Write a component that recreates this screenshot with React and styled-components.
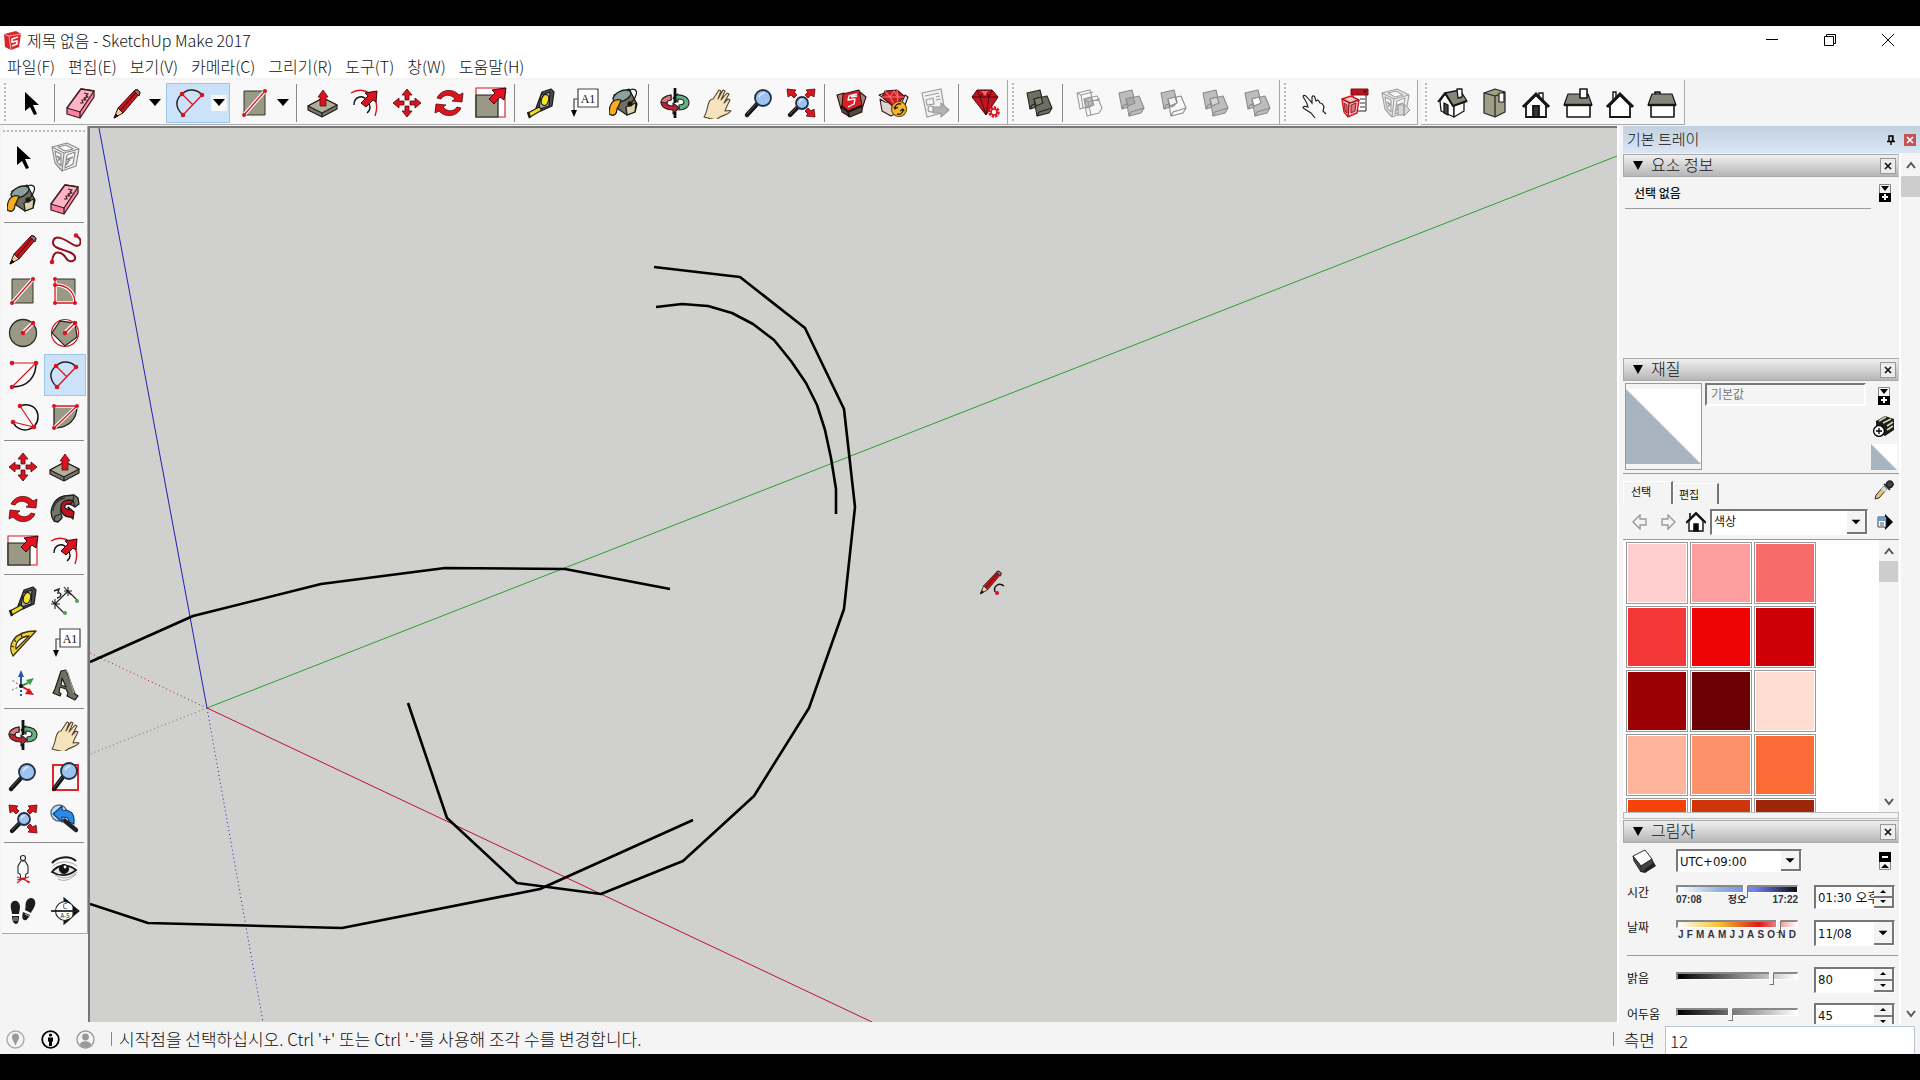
import React from 'react';
import styled, { createGlobalStyle } from 'styled-components';

const GlobalStyle = createGlobalStyle`
* { box-sizing: border-box; }

body {
  margin: 0;
  background: #000;
  color: #111;
  font-family: "Noto Sans CJK KR", "Noto Sans", sans-serif;
}

button, input, select {
  font: inherit;
  color: inherit;
  margin: 0;
  padding: 0;
  border: 0;
  border-radius: 0;
  background: none;
}
`;

const RED = '#d9141f';
const OLIVE = '#9a9985';
const DARK = '#161616';

/* ---------- icons, all on a 32 x 32 grid ---------- */

const Dot = ({ x, y, r = 2.3 }) => <circle cx={x} cy={y} r={r} fill={RED} />;

const Hand = () => (
  <path d="M3 30c2-3 3-7 4-12 1-4 3-6 5-6l6-9 2 1-3 8 5-9 2 1-4 9 6-7 2 1-5 9 4-4 2 1c-2 4-4 7-5 11 2 0 4-1 6 0-2 3-7 4-11 6l-4 3z" fill="#f6e3bd" stroke="#54442c" strokeWidth="1.1" strokeLinejoin="round" />
);

const Lens = ({ cx = 20, cy = 11, r = 8, hx = 4, hy = 28 }) => (
  <>
    <path d={`M${cx - r * 0.8} ${cy + r * 0.8}L${hx} ${hy}`} stroke={DARK} strokeWidth="4.4" strokeLinecap="round" />
    <path d={`M${cx - r * 0.9} ${cy + r * 0.9 - 1}L${hx} ${hy - 1}`} stroke="#55585c" strokeWidth="1" />
    <circle cx={cx} cy={cy} r={r} fill="#9dc2ee" stroke="#223045" strokeWidth="1.8" />
    <path d={`M${cx - r * 0.5} ${cy - r * 0.1}q${r * 0.2}-${r * 0.5} ${r * 0.7}-${r * 0.5}`} fill="none" stroke="#dcebfb" strokeWidth="1.4" />
  </>
);

const Solids = ({ a, b, cut, line = '#8b8b8b' }) => (
  <g stroke={line} strokeWidth="1.1" strokeLinejoin="round">
    <path d="M4 6l13-3 3 12-3 4-10 3z" fill={a} />
    <path d="M11 12l13-3 5 12-3 5-12 3z" fill={b} />
    <path d="M14 29l2-4 13-4" fill="none" />
    <path d="M7 22l2-4 3-1" fill="none" />
    <path d="M11 12l7-2 2 6-7 3z" fill={cut} />
  </g>
);

const WireSolids = () => (
  <g fill="none" stroke="#9a9a9a" strokeWidth="1.1" strokeLinejoin="round">
    <path d="M11 12l7-2 3 8-7 3z" fill="#bdbdbd" />
    <path d="M4 6l13-3 3 12-3 4-10 3zM4 6l4 2 12-3M8 8l2 13M11 12l13-3 5 12-3 5-12 3zM11 12l4 3 12-3M15 15l3 13" />
  </g>
);

const Frame = ({ color = '#8d8d8d' }) => (
  <g fill="none" stroke={color} strokeWidth="1.2" strokeLinejoin="round">
    <path d="M3 6l15-4 12 6-3 17-14 5L6 22z" fill="#ededed" />
    <path d="M3 6l12 6 15-4M15 12l-2 18" />
    <path d="M6 10l6 3v12l-4-4zM18 14l8-3-2 12-8 4zM9 6l8-2 7 4-8 2z" fill="#fafafa" />
    <path d="M8 15l4 3M17 19l7-3M17 24l4-6M9 20l2-4" strokeWidth="1.8" />
  </g>
);

const House = ({ roof = '#fff', chimney, door, wide }) => wide ? (
  <g stroke={DARK} strokeWidth="1.6" strokeLinejoin="round">
    {chimney === 'back' && <path d="M9 7V5h5v2" fill="#999" />}
    <path d="M5 17h23v13H5z" fill="#fff" />
    <path d="M6 7h20l4 11H2z" fill={roof} strokeWidth="1.2" />
    <path d="M2 18h28" strokeWidth="2.4" />
    {chimney === 'front' && <path d="M18 2h7v9h-7z" fill="#fff" />}
  </g>
) : (
  <g stroke={DARK} strokeWidth="1.8" strokeLinejoin="miter">
    <path d={chimney === 'right' ? 'M19 11V6h4v9' : 'M9 13V5h3v6'} fill="#fff" strokeWidth="1.4" />
    <path d="M6 18L16 8l10 10v12H6z" fill="#fff" />
    <path d="M3 20L16 7l13 13" fill="none" strokeWidth="3" />
    {door && <path d="M13 19h6v11h-6z" fill="#333" />}
  </g>
);

const icons = {
  select: <path d="M10 5v19l5-4 4 8 3-1-4-9h6z" fill="#000" />,
  eraser: (
    <g stroke="#3c1c24" strokeWidth="1.3" strokeLinejoin="round">
      <path d="M16 2l13 2v6L15 31 2 27v-6z" fill="#fb86a0" />
      <path d="M16 2l13 2-14 21-13-4z" fill="#ffb3c4" />
      <path d="M15 25v6" fill="none" />
      <path d="M19 6l4 1-2 2 2 1-4 1 2 2-4 0 1 3-3 0" fill="none" strokeWidth="1.2" />
    </g>
  ),
  pencil: (
    <g stroke="#34100f" strokeWidth="1" strokeLinejoin="round">
      <path d="M24 3q4-1 5 3L12 26l-5-5z" fill="#c5161d" />
      <path d="M26 4L10 23" stroke="#7b0b10" strokeWidth="1.4" />
      <path d="M23 4l5 5 1-3q-1-4-5-3z" fill="#8c6f74" />
      <path d="M7 21l5 5-9 5z" fill="#e9cf9f" />
      <path d="M5 27l2 2-4 2z" fill="#000" />
    </g>
  ),
  freehand: (
    <g fill="none">
      <path d="M3 29C4 14 14 20 17 25s10 4 9-1C24 16 3 18 4 9S17 7 23 11s10 1 8-5l-4-4" stroke="#8d1118" strokeWidth="2" />
      <Dot x={3} y={29} /><Dot x={27} y={2.5} />
    </g>
  ),
  arc: (
    <g fill="none" strokeWidth="1.5">
      <path d="M8 28C-1 20 1 12 7 7c6-6 15-5 20 1" stroke="#222" />
      <path d="M27 8L8 28M7 7l11 11" stroke={RED} strokeWidth="1.3" />
      <Dot x={27} y={8} /><Dot x={8} y={28} /><Dot x={7} y={7} />
    </g>
  ),
  rect: (
    <g>
      <path d="M5 4h21v24H5z" fill={OLIVE} stroke="#34342c" />
      <path d="M5 28L26 4" stroke="#fff" strokeWidth="3.6" />
      <path d="M5 28L26 4" stroke={RED} strokeWidth="1.3" />
      <Dot x={5} y={28} r={2} /><Dot x={26} y={4} r={2} />
    </g>
  ),
  rotRect: (
    <g>
      <path d="M6 4h20v24H6z" fill={OLIVE} stroke="#34342c" />
      <path d="M6 10c13 0 20 8 20 18H6V4" fill="none" stroke="#fff" strokeWidth="3.6" />
      <path d="M6 10c13 0 20 8 20 18H6V4" fill="none" stroke={RED} strokeWidth="1.3" />
      <Dot x={6} y={4} r={2} /><Dot x={6} y={10} r={2} /><Dot x={6} y={28} r={2} /><Dot x={26} y={28} r={2} />
    </g>
  ),
  circle: (
    <g>
      <circle cx="16" cy="16" r="13.5" fill={OLIVE} stroke="#2c2c28" strokeWidth="1.3" />
      <path d="M16 16l10-10" stroke="#fff" strokeWidth="4" /><path d="M16 16l10-10" stroke={RED} strokeWidth="1.4" />
      <Dot x={16} y={16} /><Dot x={26} y={6} />
    </g>
  ),
  polygon: (
    <g>
      <circle cx="16" cy="16" r="13.5" fill="#fff" stroke={RED} strokeWidth="1.2" />
      <path d="M11 4l15 2 2 14-12 9L3 16z" fill={OLIVE} stroke="#2c2c28" strokeWidth="1.3" />
      <path d="M16 16l10-10" stroke="#fff" strokeWidth="4" /><path d="M16 16l10-10" stroke={RED} strokeWidth="1.4" />
      <Dot x={16} y={16} /><Dot x={26} y={6} />
    </g>
  ),
  arcCenter: (
    <g fill="none">
      <path d="M29 4c0 14-8 24-24 24" stroke="#111" strokeWidth="1.5" />
      <path d="M5 4h24L5 28" stroke={RED} strokeWidth="1.2" />
      <Dot x={5} y={4} /><Dot x={29} y={4} /><Dot x={5} y={28} />
    </g>
  ),
  arc3: (
    <g fill="none">
      <path d="M13 5c10-4 18 2 18 11 0 14-19 18-25 5" stroke="#111" strokeWidth="1.5" />
      <path d="M13 5l14 21L6 21" stroke={RED} strokeWidth="1.2" />
      <Dot x={13} y={5} /><Dot x={27} y={26} /><Dot x={6} y={21} />
    </g>
  ),
  pie: (
    <g>
      <path d="M5 5h23c0 14-9 22-23 22z" fill={OLIVE} stroke="#222" strokeWidth="1.3" />
      <path d="M5 5h23L5 27" fill="none" stroke="#fff" strokeWidth="3.4" />
      <path d="M5 5h23L5 27" fill="none" stroke={RED} strokeWidth="1.3" />
      <Dot x={5} y={5} r={2} /><Dot x={28} y={5} r={2} /><Dot x={5} y={27} r={2} />
    </g>
  ),
  pushPull: (
    <g stroke="#20201c" strokeWidth="1.2" strokeLinejoin="round">
      <path d="M1 19l15-8 14 7v4L15 30 1 23z" fill="#77766a" />
      <path d="M1 19l15-8 14 7-15 8z" fill="#aeae9b" />
      <path d="M15 26v4" />
      <path d="M16 3l5 7h-2v9h-6v-9h-2z" fill={RED} stroke="#5c080d" strokeWidth=".8" />
    </g>
  ),
  offset: (
    <g fill="none">
      <path d="M2 6C14-2 33 8 26 29" stroke={RED} strokeWidth="1.4" />
      <path d="M5 18c0-8 8-11 13-5 4 5 4 10 0 13" stroke="#111" strokeWidth="1.4" />
      <path d="M28 4l-1 11-3-2-7 7-5-4 7-7-3-3z" fill={RED} stroke="#3c080b" />
    </g>
  ),
  move: (
    <g fill={RED} stroke="#4e070b" strokeWidth=".8">
      <path d="M16 2l5 6h-3v5h-4V8h-3zM16 30l-5-6h3v-5h4v5h3zM2 16l6-5v3h5v4H8v3zM30 16l-6 5v-3h-5v-4h5v-3z" />
    </g>
  ),
  rotate: (
    <g fill={RED} stroke="#5e080d" strokeWidth=".8">
      <path d="M4 11C8 2 20 1 26 8l4-2-1 9-10-1 3-2c-4-5-11-5-14 0z" />
      <path d="M28 21C24 30 12 31 6 24l-4 2 1-9 10 1-3 2c4 5 11 5 14 0z" />
    </g>
  ),
  scale: (
    <g>
      <path d="M1 1h29v29H1z" fill="#fff" stroke={RED} strokeWidth="1.1" />
      <path d="M1 8h22v22H1z" fill={OLIVE} stroke="#1e1e1a" strokeWidth="1.2" />
      <path d="M31 1l-2 12-4-3-6 7-5-5 6-6-3-3z" fill="#e50f1f" stroke="#3c080b" strokeWidth="1" />
    </g>
  ),
  followMe: (
    <g stroke="#1c1c1a" strokeWidth="1.3" strokeLinejoin="round">
      <path d="M9 29l-4-1C-1 20 3 6 15 3l10-1 4 3 1 6-4 3c-6-5-13-3-14 3-1 5 2 7 1 8z" fill="#74746a" />
      <path d="M4 18c0-6 5-12 12-13M25 2l-1 5 2 7M5 28l1-5 6-2" fill="none" stroke="#2c2c28" />
      <path d="M12 13c1-6 8-7 12-5l-2 3c-4-1-7 1-6 4l4 2-1-3 6 5-1 7-2-2c-6 1-11-4-10-11z" fill="#c0141d" />
    </g>
  ),
  tape: (
    <g stroke="#1c1c1c" strokeWidth="1.2" strokeLinejoin="round">
      <path d="M17 5l9-3 3 3-2 14-11 5-5-3z" fill="#4b4b4b" />
      <path d="M16 8l9-3-1 14-10 3z" fill="#a9a9a9" />
      <ellipse cx="20" cy="13" rx="3.6" ry="5.6" fill="#f5e526" transform="rotate(15 20 13)" />
      <path d="M14 20l3 3-12 7-2-4z" fill="#f0dc20" />
      <path d="M3 25l2 6" strokeWidth="2.4" />
    </g>
  ),
  text: (
    <g>
      <path d="M11 2h20v18H11z" fill="#fff" stroke="#444" strokeWidth="1.2" />
      <path d="M11 12H7v14" fill="none" stroke="#444" strokeWidth="1.2" />
      <path d="M4 23h6l-3 7z" fill="#000" />
      <text x="21" y="16" textAnchor="middle" fontSize="12" fontFamily="Liberation Serif, serif" fill="#111">A1</text>
    </g>
  ),
  paint: (
    <g stroke="#1d1d18" strokeWidth="1.3" strokeLinejoin="round">
      <path d="M5 8L20 2l8 15-2 8-8 3-9-6z" fill="#6f6e60" />
      <path d="M17 20l10-4-1 9-8 3z" fill="#ddd0ac" />
      <ellipse cx="13" cy="9" rx="9.5" ry="5" fill="#8ba0a0" transform="rotate(-24 13 9)" />
      <path d="M12 13C5 11 0 16 0 27c5 3 8 0 8-5 2-4 3-5 4-9z" fill="#f7ac1b" />
      <path d="M20 4c4-4 9-1 7 4-1 4-3 5-5 8" fill="none" strokeWidth="1.2" />
      <circle cx="21" cy="17" r="2" fill="#111" />
    </g>
  ),
  dimension: (
    <g fill="none" stroke="#222" strokeWidth="1.1">
      <path d="M6 19L19 6M6 19l9 9M19 6l9 9M2 19h9M6 14v10M3 16l7 7M15 6h8M19 2v9M15 2l7 8" />
      <path d="M5 6l5-2-1 4c4-1 4 4-1 5" strokeWidth="1.4" />
      <circle cx="16" cy="28" r="2" fill="#4ca34e" stroke="none" /><circle cx="28" cy="16" r="2" fill="#4ca34e" stroke="none" />
    </g>
  ),
  protractor: (
    <g stroke="#3d3205" strokeWidth="1.3" strokeLinejoin="round">
      <path d="M29 4L6 29C0 20 5 4 29 4z" fill="#e9cf3d" />
      <path d="M22 9L9 22c-1-6 3-12 13-13z" fill="#f9f9f9" />
      <path d="M4 19l3 1M7 12l2 3M14 7l1 3" />
    </g>
  ),
  axes: (
    <g fill="none" strokeWidth="2">
      <path d="M14 17V8" stroke="#2358a8" /><path d="M14 1l3 7h-6z" fill="#2358a8" />
      <path d="M14 17l7-3" stroke="#3a9a44" /><path d="M27 9l-4 7-4-5z" fill="#3a9a44" />
      <path d="M14 17l7 4" stroke={RED} /><path d="M27 26l-9-1 4-6z" fill={RED} />
      <path d="M14 17v11" stroke="#2358a8" strokeDasharray="2 2" /><path d="M14 17l-9-6" stroke={RED} strokeDasharray="2 2" strokeWidth="1" /><path d="M14 17l-9 4" stroke="#3a9a44" strokeDasharray="2 2" strokeWidth="1" />
      <circle cx="14" cy="17" r="2" fill="#111" />
    </g>
  ),
  text3d: (
    <g stroke="#1b1b18" strokeWidth="1.2" strokeLinejoin="round" fill="#6f6f63">
      <path d="M12 2l5-1 9 24 3 2-3 4-8-4 1-3-2-4-6-2-1 5 2 2-1 2-7-3 2-4z" />
      <path d="M13 9l4 9-5-2z" fill="#f4f4f4" />
      <path d="M17 1l2 3 6 20" fill="none" stroke="#a4a498" />
    </g>
  ),
  orbit: (
    <g stroke="#222" strokeWidth="1.1" strokeLinejoin="round">
      <path d="M16 8c9-1 14 3 14 8 0 4-4 7-10 7v-5c3 0 5-1 5-3s-3-3-6-3v3l-5-4 5-4z" fill="#62b381" />
      <path d="M12 8C6 9 2 12 2 15c0 5 5 8 12 8v4l6-6-6-5v3c-4 0-6-1-6-3s2-3 4-3z" fill="#bd2631" />
      <path d="M12 8C6 9 2 12 2 15l6 1c0-2 2-3 4-3z" fill="#e2777c" />
      <path d="M16 1v15M16 25v6" strokeWidth="2.8" stroke="#111" />
    </g>
  ),
  pan: <Hand />,
  zoom: <Lens />,
  zoomWindow: (
    <g>
      <path d="M4 4h25v25H4z" fill="none" stroke="#e02430" strokeWidth="2" />
      <Lens cx={20} cy={10} hx={5} hy={28} />
    </g>
  ),
  extents: (
    <g>
      <Lens cx={17} cy={16} r={6} hx={5} hy={28} />
      <g fill={RED} stroke="#5e080d" strokeWidth=".8">
        <path d="M2 2l9 1-2 2 3 3-3 3-3-3-3 2zM30 2l-9 1 2 2-3 3 3 3 3-3 3 2zM30 30l-9-1 2-2-3-3 3-3 3 3 3-2z" />
      </g>
    </g>
  ),
  previous: (
    <g>
      <circle cx="10" cy="10" r="8" fill="#c3daf4" stroke="#5c7287" strokeWidth="1.4" />
      <path d="M4 11l9-8v4c9 0 13 3 12 14l-5-2c0-4-2-5-7-5v5z" fill="#2a8ae6" stroke="#0c3c72" strokeWidth="1.1" />
      <path d="M16 18l11 9" stroke="#222" strokeWidth="4.4" strokeLinecap="round" />
    </g>
  ),
  camera: (
    <g fill="#fff" stroke="#222" strokeWidth="1.1">
      <circle cx="16" cy="5" r="2.5" />
      <path d="M14 8h4l3 5v7l-2 1-1 5h-4l-1-5-2-1v-7z" />
      <path d="M10 30l6-5 6 5M10 24l13 5M22 24l-12 3" stroke={RED} fill="none" />
    </g>
  ),
  look: (
    <g fill="none" stroke="#1b1b1b">
      <path d="M3 10C8 4 20 2 27 8" strokeWidth="2" />
      <path d="M6 22c8 5 16 3 22-3M9 26c6 3 12 1 18-5M4 13c6-5 16-6 24 0" stroke="#a8a8a8" />
      <path d="M3 19c6-8 16-8 24-2-7 6-16 7-24 2z" fill="#e6e6e6" strokeWidth="1.8" />
      <circle cx="15" cy="16" r="4.6" fill="#111" /><circle cx="16" cy="14" r="1.4" fill="#fff" stroke="none" />
    </g>
  ),
  walk: (
    <g fill="#1c1c1c">
      <path d="M4 9c2-5 8-4 9 2 0 4-1 6-1 8H5c0-3-2-6-1-10zM5 21h7c0 5-1 8-3 8s-4-3-4-8z" />
      <path d="M19 7c3-7 11-4 9 3-1 4-3 5-4 8l-6-3c1-3 0-5 1-8zM16 17l7 3c-2 4-4 6-6 5s-2-4-1-8z" />
      <path d="M6 23h5M18 19l4 2M6 25h5" stroke="#ddd" strokeWidth=".8" />
    </g>
  ),
  section: (
    <g fill="none" stroke="#222" strokeWidth="1.1">
      <circle cx="16" cy="16" r="9.5" fill="#fff" />
      <path d="M15 3l6 5-6-2zM15 29l6-5-6 2zM24 11l6 5-6 5z" fill="#000" />
      <path d="M2 16h28" strokeWidth="1.8" />
      <text x="16" y="14" textAnchor="middle" fontSize="7" fill="#222" stroke="none">C</text>
      <text x="16" y="23" textAnchor="middle" fontSize="6" fill="#222" stroke="none">A-5</text>
    </g>
  ),
  warehouse: (
    <g stroke="#351012" strokeWidth="1.1" strokeLinejoin="round">
      <path d="M2 8l7-2v14l-3 2zM25 5l6 5-4 12-2-2z" fill="#9a8678" />
      <path d="M8 7l16-4 3 15-14 6-6-5z" fill="#da1d26" />
      <path d="M22 7l-8 2-1 4 7-1-1 5-6 3M16 10l6-1" fill="none" stroke="#fff" strokeWidth="1.3" />
      <path d="M6 19l7 6 14-6v6l-12 5-8-5z" fill="#54483f" />
      <path d="M13 25l1 5M6 19l7 6 14-6" fill="none" stroke="#111" strokeWidth="1.6" />
    </g>
  ),
  extWarehouse: (
    <g stroke="#3a1414" strokeWidth="1.1" strokeLinejoin="round">
      <path d="M2 8l6 4v-6zM28 8l3 2-3 8-3-3z" fill="#e9e3df" />
      <path d="M3 12l5 3 15 1 4 6-13 7-9-5z" fill="#dcd4ce" />
      <path d="M8 4l12-1 7 6-9 12L5 10z" fill="#cf1a25" />
      <path d="M5 10h22M8 4l5 6 6 10 2-10-1-7M13 10l4-6 4 6" fill="none" stroke="#f47a80" />
      <circle cx="22" cy="22" r="7.5" fill="#f8b62b" stroke="#6d4500" />
      <path d="M18 21c0-3 3-5 6-4M26 23c0 3-3 5-6 4M17 20l1 2 3-2M27 24l-1-2-3 2" fill="none" stroke="#222" strokeWidth="1.4" />
    </g>
  ),
  layout: (
    <g fill="#f2f2f2" stroke="#9d9d9d" strokeWidth="1.2">
      <path d="M3 6l19-4 4 23-18 5z" /><path d="M6 9l14-3M7 13l7-2 1 6-7 1zM17 10l4-1M17 13l5-1" fill="none" />
      <circle cx="12" cy="22" r="3" />
      <path d="M14 20h8v-4l8 7-8 7v-4h-8z" fill="#b2b2b2" />
    </g>
  ),
  extManager: (
    <g stroke="#4e070c" strokeWidth="1" strokeLinejoin="round">
      <path d="M8 3h15l6 7-12 18L3 10z" fill="#c31522" />
      <path d="M3 10h26M8 3l3 7 6 18 3-18 3-7M11 10l5-7 4 7" fill="none" />
      <path d="M12 4h7l-3 5z" fill="#f26b72" stroke="none" />
      <circle cx="25" cy="25" r="4.5" fill="#fff" stroke={RED} strokeWidth="2.6" strokeDasharray="2.4 1" />
      <circle cx="25" cy="25" r="3" fill="#fff" stroke={RED} strokeWidth="1.6" />
    </g>
  ),
  outerShell: <Solids a="#6e6e62" b="#6e6e62" cut="#7d7d70" line="#25251f" />,
  intersect: <WireSolids />,
  union: <Solids a="#bdbdbd" b="#bdbdbd" cut="#a9a9a9" />,
  subtract: <Solids a="#bdbdbd" b="none" cut="#f4f4f4" />,
  trim: <Solids a="#bdbdbd" b="#bdbdbd" cut="#d4d4d4" />,
  split: <Solids a="#bdbdbd" b="#bdbdbd" cut="#fff" />,
  finger: (
    <path d="M8 9c2-2 4 1 9 7V10c1-2 3-1 3 1l1 3c2-2 3 0 4 2 2 0 3 1 4 4l-1 4 3 3M8 9c0 2 4 5 5 11-3-1-5-1-5 1l8 5 4 5" fill="none" stroke="#222" strokeWidth="1.2" />
  ),
  dynOptions: (
    <g stroke="#7b1017" strokeWidth="1">
      <path d="M16 6h13v18H16z" fill="#fff" stroke="#222" />
      <path d="M14 2h17v6H14z" fill="#b51420" /><path d="M26 4h4l-2 2z" fill="#000" />
      <path d="M23 12h5M23 16h5M23 20h5" stroke="#333" />
      <path d="M5 12l9-3 8 4-2 13-9 4-4-5z" fill="#f3c4c6" stroke={RED} strokeWidth="1.4" />
      <path d="M5 12l8 4 9-3M12 16l-1 14" fill="none" stroke="#a01720" strokeWidth="1.4" />
      <path d="M7 16l3 2v8l-2-2zM14 18l5-2-1 8-4 2z" fill="#d8767a" stroke="#a01720" />
    </g>
  ),
  dynAttributes: (
    <g>
      <Frame color="#a3a3a3" />
      <path d="M19 18h6v10h-6zM25 17l6 6-6 6z" fill="#d6d6d6" stroke="#999" />
    </g>
  ),
  component: <Frame />,
  iso: (
    <g stroke={DARK} strokeWidth="1.3" strokeLinejoin="round">
      <path d="M4 14l5-7 9 11v12L5 24z" fill="#fff" /><path d="M18 18l10-4v10l-10 6z" fill="#fff" />
      <path d="M9 6l15-3 7 11-14 5z" fill="#86867a" />
      <path d="M2 15l7-9 8 13 14-5" fill="none" strokeWidth="2" />
      <path d="M21 2h5v8l-4 1z" fill="#fff" /><path d="M8 16l4 2v10l-4-2z" fill="#444" />
    </g>
  ),
  top: (
    <g stroke="#222" strokeWidth="1.2" strokeLinejoin="round">
      <path d="M6 6l11-4 10 3v20l-10 5-11-4z" fill="#9f9f85" />
      <path d="M6 6l11 3 10-4M17 9v21" fill="none" /><path d="M21 6h5v9h-5z" fill="#fff" />
    </g>
  ),
  front: <House chimney="right" door />,
  right: <House wide roof="#86867a" chimney="front" />,
  back: <House />,
  left: <House wide roof="#86867a" chimney="back" />,
};

const Icon = ({ name, size = 32 }) => (
  <svg width={size} height={size} viewBox="0 0 32 32" aria-hidden="true">{icons[name]}</svg>
);

/* ---------- window frame ---------- */

const Window = styled.div`
height: 100vh;
display: flex;
flex-direction: column;
background: #f4f4f4;
border-top: 26px solid #000;
border-bottom: 26px solid #000;
overflow: hidden;
`;

const TitleBar = styled.header`
display: flex;
align-items: center;
height: 28px;
padding: 0 3px 0 4px;
background: #fff;

h1 {
  flex: 1;
  margin: 0 0 0 6px;
  font-size: 16px;
  line-height: 28px;
  font-weight: 300;
}
`;

const WindowButton = styled.button`
display: grid;
place-items: center;
width: 58px;
height: 28px;
`;

const MenuBar = styled.nav`
display: flex;
gap: 13px;
height: 24px;
padding-left: 7px;
background: #fff;
font-size: 16px;
line-height: 24px;
font-weight: 300;

a {
  color: inherit;
  text-decoration: none;
}
`;

/* ---------- toolbars ---------- */

const ToolbarRow = styled.div`
display: flex;
height: 48px;
padding-top: 2px;
background: #f4f4f4;
`;

const ToolGroup = styled.div`
display: flex;
align-items: center;
height: 45px;
padding: 1px 1px 0 0;
margin-right: ${p => p.$apart ? '3px' : '0'};
background: #f9f8f9;
border-right: 1px solid #aaa;
border-bottom: 1px solid #aaa;
`;

const Grip = styled.span`
width: 2px;
height: 40px;
margin: 0 4px;
background: repeating-linear-gradient(#bbb 0 2px, transparent 2px 4px);
`;

const Divider = styled.span`
width: 1px;
height: 38px;
margin: 0 5px 0 2px;
background: #8a8a8a;
`;

const ToolButton = styled.button`
display: grid;
place-items: center;
width: 42px;
height: ${p => p.$tall ? '42px' : '40px'};
background: ${p => p.$active ? '#cbe2f9' : 'transparent'};
border: 1px solid ${p => p.$active ? '#9cc6ee' : 'transparent'};
`;

const SplitTool = styled.div`
display: flex;
align-items: center;
width: 64px;
height: 40px;
padding-left: 4px;
background: ${p => p.$active ? '#cbe2f9' : 'transparent'};
border: 1px solid ${p => p.$active ? '#9cc6ee' : 'transparent'};

button {
  display: grid;
  place-items: center;
}

button:first-child {
  width: 40px;
}

button:last-child {
  width: 16px;
  height: 16px;
  background: #f9f8f9;
}
`;

const Work = styled.main`
flex: 1;
min-height: 0;
display: flex;
`;

const SideBar = styled.aside`
width: 88px;
padding-left: 2px;
`;

const SidePalette = styled.div`
display: grid;
grid-template-columns: 42px 42px;
padding-bottom: 1px;
background: #f9f8f9;
border-right: 1px solid #aaa;
border-bottom: 1px solid #aaa;
`;

const SideGrip = styled.span`
grid-column: 1 / -1;
height: 2px;
margin: 4px 1px;
background: repeating-linear-gradient(90deg, #bbb 0 2px, transparent 2px 4px);
`;

const SideDivider = styled.span`
grid-column: 1 / -1;
height: 1px;
margin: 2px 2px 5px;
background: #8a8a8a;
`;

const Viewport = styled.section`
flex: 1;
min-width: 0;
margin-bottom: 2px;
border-top: 2px solid #777;
border-left: 2px solid #777;
background: #d0d0ce;

svg {
  display: block;
  width: 100%;
  height: 100%;
}
`;

/* ---------- tray ---------- */

const Tray = styled.aside`
display: flex;
flex-direction: column;
width: 303px;
padding-left: 4px;
border-left: 2px solid #fff;
`;

const TrayTitle = styled.div`
display: flex;
align-items: center;
height: 27px;
flex: none;
padding: 0 4px;
background: linear-gradient(#c3d0df, #dae5f5);

h2 {
  flex: 1;
  margin: 0;
  font-size: 15px;
  line-height: 24px;
  padding-bottom: 2px;
  font-weight: 300;
}
`;

const PinButton = styled.button`
display: grid;
place-items: center;
width: 12px;
height: 12px;
margin-right: 7px;
`;

const CloseTray = styled.button`
display: grid;
place-items: center;
width: 12px;
height: 12px;
background: #c25357;
`;

const TrayBody = styled.div`
flex: 1;
min-height: 0;
display: flex;
overflow: hidden;
`;

const Panels = styled.div`
flex: 1;
min-width: 0;
padding-top: 1px;
`;

const ScrollRail = styled.div`
display: flex;
flex-direction: column;
align-items: center;
flex: none;
width: ${p => p.$wide ? '21px' : '19px'};
background: #f4f4f4;
border-left: ${p => p.$wide ? '2px solid #fff' : '0'};

button {
  display: grid;
  place-items: center;
  width: 100%;
  height: 21px;
}

button:first-child {
  height: ${p => p.$wide ? '23px' : '21px'};
}

span {
  width: 100%;
  height: 21px;
  margin-bottom: auto;
  background: #cdcdcd;
}
`;

const PanelHead = styled.header`
display: flex;
align-items: center;
height: 23px;
padding: 0 2px 0 9px;
background: linear-gradient(#f0f0f0, #b6b6b6);
border: 1px solid #a9a9a9;
border-right-color: #ccc;

h3 {
  flex: 1;
  margin: 0 0 0 8px;
  padding-bottom: 3px;
  font-size: 16px;
  line-height: 18px;
  font-weight: 300;
}

button {
  display: grid;
  place-items: center;
  width: 16px;
  height: 16px;
  background: #ececec;
  border: 1px solid #999;
}
`;

const InfoBody = styled.div`
display: flex;
justify-content: space-between;
align-items: flex-start;
height: 181px;
padding: 7px 8px 0 2px;

p {
  width: 246px;
  height: 25px;
  margin: 0;
  padding-left: 9px;
  border-bottom: 1px solid #999;
  font-size: 12px;
  line-height: 17px;
  font-weight: 500;
}
`;

const MaterialTop = styled.div`
display: flex;
gap: 3px;
height: 93px;
padding: 2px 0 0 2px;
border-bottom: 1px solid #999;
`;

const Preview = styled.div`
width: 77px;
height: 87px;
padding: 5px 0;
border: 1px solid #999;

svg {
  display: block;
}
`;

const NameField = styled.input`
width: 161px;
height: 23px;
padding: 0 4px 2px;
font-size: 12px;
color: #777;
background: #f4f4f4;
border: 2px solid #fff;
border-top-color: #777;
border-left-color: #777;
`;

const MaterialTools = styled.div`
flex: 1;
display: flex;
flex-direction: column;
align-items: center;
gap: 10px;
padding-top: 4px;

button {
  display: grid;
}

button:last-child {
  margin-top: -3px;
}
`;

const TabRow = styled.div`
display: flex;
align-items: flex-end;
height: 30px;
padding-right: 4px;
`;

const Tab = styled.button`
width: ${p => p.$on ? '50px' : '46px'};
height: ${p => p.$on ? '23px' : '21px'};
padding: 0 0 ${p => p.$on ? '5px' : '1px'} ${p => p.$on ? '7px' : '5px'};
text-align: left;
font-size: 11px;
line-height: 14px;
border: 1px solid #fff;
border-right: 2px solid #777;
border-bottom: 0;
`;

const Dropper = styled.button`
display: grid;
align-self: flex-start;
margin: 5px 0 0 auto;
`;

const NavRow = styled.div`
display: flex;
align-items: center;
height: 36px;
padding: 0 3px;
border-bottom: 1px solid #999;

> button {
  display: grid;
  place-items: center;
  width: 28px;
  height: 28px;
}

> button:last-child {
  width: 18px;
  margin-left: 8px;
}
`;

const SelectBox = styled.div`
position: relative;
width: ${p => p.$w}px;
height: ${p => p.$h}px;
background: #fff;
border: 1px solid #fff;
border-top: 2px solid #777;
border-left: 2px solid #777;

select {
  display: block;
  width: 100%;
  height: 100%;
  padding: 0 0 0 2px;
  appearance: none;
  font-family: "DejaVu Sans Condensed", "Noto Sans CJK KR", sans-serif;
  font-size: ${p => p.$small ? '12px' : '13px'};
}

svg {
  position: absolute;
  top: 0;
  right: 0;
  width: 20px;
  height: 100%;
  background: #f4f4f4;
  border-right: 2px solid #777;
  border-bottom: 2px solid #777;
  pointer-events: none;
}
`;

const ColorList = styled.div`
display: flex;
height: 272px;
margin-right: 1px;
background: #fff;
overflow: hidden;
`;

const Swatches = styled.div`
flex: 1;
display: grid;
grid-template-columns: repeat(3, 62px);
grid-auto-rows: 62px;
gap: 2px;
padding: 2px 0 0 3px;
`;

const Swatch = styled.button`
padding: 1px;
border: 1px solid #999;
background: ${p => p.$color} content-box;
`;

const PanelFoot = styled.div`
height: 7px;
margin-bottom: 1px;
border: 1px solid #bbb;
`;

const ShadowTop = styled.div`
display: flex;
align-items: center;
gap: 19px;
height: 35px;
margin-bottom: 7px;
padding: 0 8px;

> :last-child {
  margin-left: auto;
}
`;

const IconButton = styled.button`
display: grid;
place-items: center;
`;

const ShadowRow = styled.div`
display: grid;
grid-template-columns: 49px 138px 81px;
align-items: start;
height: ${p => p.$h}px;
padding-left: 4px;

label {
  font-size: 12px;
  line-height: ${p => p.$low ? '22px' : '14px'};
  white-space: nowrap;
}
`;

const SliderBox = styled.div`
width: 122px;
padding-top: ${p => p.$low ? '5px' : '0'};

input {
  display: block;
  width: 100%;
  height: 8px;
  appearance: none;
}

input::-webkit-slider-runnable-track {
  height: 8px;
  background: ${p => p.$fill};
  border: 1px solid #fff;
  border-top: 2px solid #888;
  border-left: 2px solid #888;
}

input::-webkit-slider-thumb {
  appearance: none;
  width: 5px;
  height: 13px;
  margin-top: -2px;
  background: #f4f4f4;
  border: 1px solid #fff;
  border-right-color: #777;
  border-bottom-color: #777;
}
`;

const Ticks = styled.div`
display: flex;
justify-content: space-between;
padding-top: 1px;
margin: 0 ${p => p.$inset ? '2px' : '0'};
font-family: "Liberation Sans", "Noto Sans CJK KR", sans-serif;
font-size: 10px;
line-height: 12px;
font-weight: 700;
color: #33333d;
`;

const Spinner = styled.div`
display: flex;
width: 81px;
height: ${p => p.$h}px;
background: #fff;
border: 1px solid #fff;
border-top: 2px solid #777;
border-left: 2px solid #777;

input {
  flex: 1;
  min-width: 0;
  padding: 0 0 3px 2px;
  font-family: "DejaVu Sans Condensed", "Noto Sans CJK KR", sans-serif;
  font-size: 13px;
}

div {
  display: flex;
  flex: none;
  flex-direction: column;
  width: 20px;
}

button {
  flex: 1;
  display: grid;
  place-items: center;
  background: #f4f4f4;
  border-right: 2px solid #777;
  border-bottom: 2px solid #777;
}
`;

const Rule = styled.hr`
height: 1px;
margin: 0 1px 11px 4px;
border: 0;
background: #999;
`;

/* ---------- status bar ---------- */

const StatusBar = styled.footer`
display: flex;
align-items: center;
height: 30px;
padding: 0 5px 0 6px;

p {
  flex: 1;
  margin: 0 0 0 7px;
  font-size: 17px;
  line-height: 28px;
  font-weight: 300;
}

label {
  margin: 0 10px 0 10px;
  font-size: 17px;
  font-weight: 300;
}

input {
  align-self: flex-end;
  width: 250px;
  height: 28px;
  padding: 0 4px;
  font-size: 17px;
  font-weight: 300;
  background: #fff;
  border: 1px solid #b8c4d0;
  border-bottom: 0;
}
`;

const StatusIcon = styled.button`
display: grid;
width: 19px;
height: 19px;
margin-right: 16px;
`;

const StatusLine = styled.span`
width: 1px;
height: 14px;
background: #888;
`;

const Chevron = ({ up }) => (
  <svg width="12" height="8" viewBox="0 0 12 8"><path d={up ? 'M2 7l4-5 4 5' : 'M2 1l4 5 4-5'} fill="none" stroke="#555" strokeWidth="2" /></svg>
);

const Cross = ({ color = '#111' }) => (
  <svg width="8" height="8" viewBox="0 0 8 8"><path d="M1 1l6 6M7 1L1 7" stroke={color} strokeWidth="1.6" /></svg>
);

const DetailToggle = ({ less }) => (
  <IconButton aria-label={less ? '세부 정보 숨기기' : '세부 정보 표시'}>
    <svg width="12" height="18" viewBox="0 0 12 18">
      <path d="M0.5 0.5h11v17h-11z" fill="#f4f4f4" stroke="#888" />
      {less ? (
        <><path d="M0 0h12v10H0z" /><path d="M3 5h6" stroke="#fff" strokeWidth="2" /><path d="M2 16h8l-4-4z" /></>
      ) : (
        <><path d="M0 9h12v9H0z" /><path d="M3 13h6M6 10v6" stroke="#fff" strokeWidth="2" /><path d="M2 2h8L6 7z" /></>
      )}
    </svg>
  </IconButton>
);

const Half = ({ size }) => (
  <svg width={size} height={size} viewBox="0 0 75 75"><path d="M0 0h75v75z" fill="#fff" /><path d="M0 0v75h75z" fill="#a8b4bf" /></svg>
);

const HomeIcon = () => (
  <svg width="20" height="20" viewBox="0 0 20 20"><path d="M3 9v10h14V9l-7-7z" fill="#fff" stroke="#111" strokeWidth="1.4" /><path d="M0 11L10 1l10 10" fill="none" stroke="#111" strokeWidth="2" /><path d="M4 6V1M8 19v-7h4v7z" stroke="#111" strokeWidth="1.6" /></svg>
);

const Head = ({ title }) => (
  <PanelHead>
    <svg width="10" height="9" viewBox="0 0 10 9"><path d="M0 0h10L5 9z" /></svg>
    <h3>{title}</h3>
    <button aria-label={`${title} 닫기`}><Cross /></button>
  </PanelHead>
);

const Tools = ({ names, tall, active }) => names.map(name => (
  <ToolButton key={name} $tall={tall} $active={name === active} aria-label={name}><Icon name={name} /></ToolButton>
));

const Split = ({ name, active }) => (
  <SplitTool $active={active}>
    <button aria-label={name}><Icon name={name} /></button>
    <button aria-label={`${name} menu`}>
      <svg width="12" height="7" viewBox="0 0 12 7"><path d="M0 0h12L6 7z" /></svg>
    </button>
  </SplitTool>
);

const SelectField = ({ w, h, label, value, small }) => (
  <SelectBox $w={w} $h={h} $small={small}>
    <select aria-label={label} defaultValue={value}><option>{value}</option></select>
    <svg viewBox="0 0 20 20"><path d="M5 8h10l-5 5z" /></svg>
  </SelectBox>
);

const SpinField = ({ h = 26, label, value }) => (
  <Spinner $h={h}>
    <input aria-label={label} defaultValue={value} />
    <div>
      <button aria-label="증가"><svg width="6" height="3"><path d="M0 3h6L3 0z" /></svg></button>
      <button aria-label="감소"><svg width="6" height="3"><path d="M0 0h6L3 3z" /></svg></button>
    </div>
  </Spinner>
);

const menus = ['파일(F)', '편집(E)', '보기(V)', '카메라(C)', '그리기(R)', '도구(T)', '창(W)', '도움말(H)'];

const sideTools = [
  ['select', 'component', 'paint', 'eraser'],
  ['pencil', 'freehand', 'rect', 'rotRect', 'circle', 'polygon', 'arcCenter', 'arc', 'arc3', 'pie'],
  ['move', 'pushPull', 'rotate', 'followMe', 'scale', 'offset'],
  ['tape', 'dimension', 'protractor', 'text', 'axes', 'text3d'],
  ['orbit', 'pan', 'zoom', 'zoomWindow', 'extents', 'previous'],
  ['camera', 'look', 'walk', 'section'],
];

const colors = [
  '#ffcfcf', '#fc9e9e', '#f76b6a',
  '#f43838', '#ef0405', '#cf0005',
  '#9b0005', '#6b0004', '#ffddd0',
  '#ffb49c', '#fd9169', '#fa6b36',
  '#f54208', '#d03409', '#9c2607',
];

const Scene = () => (
  <svg viewBox="90 128 1527 894" preserveAspectRatio="xMinYMin slice" role="img" aria-label="모델">
    <g fill="none" strokeWidth="1">
      <path d="M207 708L99 128" stroke="#2020b0" />
      <path d="M207 708l56 314" stroke="#2020b0" strokeDasharray="1 3" />
      <path d="M207 708l1410-552" stroke="#2fa02f" />
      <path d="M207 708L90 754" stroke="#4a8a4a" strokeDasharray="1 3" />
      <path d="M207 708l665 314" stroke="#c01030" />
      <path d="M207 708L90 653" stroke="#c01030" strokeDasharray="1 3" />
    </g>
    <g fill="none" stroke="#000" strokeWidth="2.6" strokeLinejoin="round">
      <path d="M90 662L193 616 321 584 445 568 565 569 670 589" />
      <path d="M90 904L148 923 342 928 540 889 693 820" />
      <path d="M408 703L447 818 517 883 601 894 683 861 754 796 809 708 844 609 855 507 844 409 805 328 740 277 654 267" />
      <path d="M656 307L682 304 708 306 732 313 753 324 774 340 791 361 806 383 817 405 825 430 831 458 836 489 836 514" />
    </g>
    <g transform="translate(978 569) scale(.8)">{icons.pencil}</g>
    <path d="M1004 586c-5-4-11 0-9 6" fill="none" stroke="#111" strokeWidth="1.4" />
    <circle cx="997" cy="593" r="2" fill={RED} />
  </svg>
);

const App = () => {
  return (
    <>
      <GlobalStyle />
      <Window>
        <TitleBar>
          <svg width="17" height="19" viewBox="0 0 17 19">
            <path d="M0 3l12-3 5 3-2 13-8 3-6-3z" fill="#d9262d" />
            <path d="M0 3l5 2 12-2M5 5l2 14" fill="none" stroke="#f6a5a7" />
            <path d="M14 6L8 8v3l5-1v3l-5 2" fill="none" stroke="#fff" strokeWidth="1.5" />
          </svg>
          <h1>제목 없음 - SketchUp Make 2017</h1>
          <WindowButton aria-label="최소화"><svg width="12" height="12"><path d="M0 5.5h12" stroke="#000" /></svg></WindowButton>
          <WindowButton aria-label="이전 크기로 복원"><svg width="12" height="12"><path d="M.5 2.5h9v9h-9zM2.5 2V.5h9v9H10" fill="none" stroke="#000" /></svg></WindowButton>
          <WindowButton aria-label="닫기"><svg width="12" height="12"><path d="M0 0l12 12M12 0L0 12" stroke="#000" /></svg></WindowButton>
        </TitleBar>

        <MenuBar>
          {menus.map(m => <a href="#" key={m}>{m}</a>)}
        </MenuBar>

        <ToolbarRow>
          <ToolGroup>
            <Grip />
            <Tools names={['select']} />
            <Divider />
            <Tools names={['eraser']} />
            <Split name="pencil" />
            <Split name="arc" active />
            <Split name="rect" />
            <Divider />
            <Tools names={['pushPull', 'offset', 'move', 'rotate', 'scale']} />
            <Divider />
            <Tools names={['tape', 'text', 'paint']} />
            <Divider />
            <Tools names={['orbit', 'pan', 'zoom', 'extents']} />
            <Divider />
            <Tools names={['warehouse', 'extWarehouse', 'layout']} />
            <Divider />
            <Tools names={['extManager']} />
          </ToolGroup>
          <ToolGroup>
            <Grip />
            <Tools names={['outerShell']} />
            <Divider />
            <Tools names={['intersect', 'union', 'subtract', 'trim', 'split']} />
          </ToolGroup>
          <ToolGroup $apart>
            <Grip />
            <Tools names={['finger', 'dynOptions', 'dynAttributes']} />
          </ToolGroup>
          <ToolGroup>
            <Grip />
            <Tools names={['iso', 'top', 'front', 'right', 'back', 'left']} />
          </ToolGroup>
        </ToolbarRow>

        <Work>
          <SideBar>
            <SidePalette>
              <SideGrip />
              {sideTools.map((names, i) => (
                <React.Fragment key={names[0]}>
                  {i > 0 && <SideDivider />}
                  <Tools names={names} tall active="arc" />
                </React.Fragment>
              ))}
            </SidePalette>
          </SideBar>

          <Viewport><Scene /></Viewport>

          <Tray>
            <TrayTitle>
              <h2>기본 트레이</h2>
              <PinButton aria-label="고정"><svg width="8" height="10" viewBox="0 0 8 10"><path d="M2 6V1h4v5M0 6.5h8M4 7v3M5.5 1v5" fill="none" stroke="#000" strokeWidth="1.4" /></svg></PinButton>
              <CloseTray aria-label="트레이 닫기"><Cross color="#fff" /></CloseTray>
            </TrayTitle>

            <TrayBody>
              <Panels>
                <Head title="요소 정보" />
                <InfoBody>
                  <p>선택 없음</p>
                  <DetailToggle />
                </InfoBody>

                <Head title="재질" />
                <MaterialTop>
                  <Preview><Half size={75} /></Preview>
                  <NameField aria-label="재질 이름" defaultValue="기본값" />
                  <MaterialTools>
                    <DetailToggle />
                    <button aria-label="재질 만들기">
                      <svg width="22" height="22" viewBox="0 0 22 22">
                        <path d="M3 6l9-5 9 3v11l-9 6-9-5z" fill="#1c1c18" />
                        <path d="M6 6l7-4M10 8l8-4M14 11l6-4M14 15l6-4" stroke="#d8d2b8" strokeWidth="1.6" />
                        <circle cx="6" cy="16" r="5.4" fill="#fff" stroke="#000" strokeWidth="1.3" />
                        <path d="M3 16h6M6 13v6" stroke="#000" strokeWidth="1.3" />
                      </svg>
                    </button>
                    <button aria-label="기본 재질"><Half size={26} /></button>
                  </MaterialTools>
                </MaterialTop>
                <TabRow>
                  <Tab $on>선택</Tab>
                  <Tab>편집</Tab>
                  <Dropper aria-label="샘플 페인트">
                    <svg width="22" height="22" viewBox="0 0 22 22">
                      <path d="M2 20l1-4 8-9 3 3-8 9z" fill="#e8c17a" stroke="#333" />
                      <path d="M8 10l4 3 2-3-3-3z" fill="#ddd" />
                      <path d="M11 5l6 6M13 6c1-4 4-5 6-3s1 5-3 6z" fill="#444" stroke="#222" strokeWidth="1.6" />
                    </svg>
                  </Dropper>
                </TabRow>
                <NavRow>
                  <button aria-label="뒤로"><svg width="16" height="16" viewBox="0 0 16 16"><path d="M1 8l7-7v4h6v6H8v4z" fill="none" stroke="#999" strokeWidth="1.4" /></svg></button>
                  <button aria-label="앞으로"><svg width="16" height="16" viewBox="0 0 16 16"><path d="M15 8L8 1v4H2v6h6v4z" fill="none" stroke="#999" strokeWidth="1.4" /></svg></button>
                  <button aria-label="모델 내"><HomeIcon /></button>
                  <SelectField w={158} h={26} label="재질 모음" value="색상" small />
                  <button aria-label="세부 정보">
                    <svg width="16" height="18" viewBox="0 0 16 18"><path d="M8 1l8 8-8 8z" /><path d="M1 4h8v10H1z" fill="#fff" stroke="#345" /><path d="M1 4h8v4H1z" fill="#6b9bd0" /><path d="M3 10h4M3 12h4" stroke="#555" /></svg>
                  </button>
                </NavRow>
                <ColorList>
                  <Swatches>
                    {colors.map(c => <Swatch key={c} $color={c} aria-label={c} />)}
                  </Swatches>
                  <ScrollRail>
                    <button aria-label="위로"><Chevron up /></button>
                    <span />
                    <button aria-label="아래로"><Chevron /></button>
                  </ScrollRail>
                </ColorList>
                <PanelFoot />

                <Head title="그림자" />
                <ShadowTop>
                  <IconButton aria-label="그림자 표시">
                    <svg width="26" height="26" viewBox="0 0 26 26">
                      <path d="M10 18l12-5 3 5-11 7-4-1z" fill="#222" />
                      <path d="M2 8l12-6 7 9-11 7z" fill="#fff" stroke="#333" />
                      <path d="M2 8l8 10v6L3 13zM10 18l11-7 1 4-12 9z" fill="#444" stroke="#333" />
                    </svg>
                  </IconButton>
                  <SelectField w={126} h={23} label="표준 시간대" value="UTC+09:00" />
                  <DetailToggle less />
                </ShadowTop>
                <ShadowRow $h={35}>
                  <label htmlFor="time">시간</label>
                  <SliderBox $fill="linear-gradient(90deg, #fff, #8fb4e0 35%, #6f7ff0 65%, #0a0a18)">
                    <input id="time" type="range" defaultValue="57" />
                    <Ticks><span>07:08</span><span>정오</span><span>17:22</span></Ticks>
                  </SliderBox>
                  <SpinField h={24} label="시각" value="01:30 오후" />
                </ShadowRow>
                <ShadowRow $h={35}>
                  <label htmlFor="date">날짜</label>
                  <SliderBox $fill="linear-gradient(90deg, #fff, #f2c230 35%, #e01818 68%, #fff)">
                    <input id="date" type="range" defaultValue="86" />
                    <Ticks $inset>{'JFMAMJJASOND'.split('').map((m, i) => <span key={i}>{m}</span>)}</Ticks>
                  </SliderBox>
                  <SelectField w={81} h={26} label="날짜 값" value="11/08" />
                </ShadowRow>
                <Rule />
                <ShadowRow $h={36} $low>
                  <label htmlFor="light">밝음</label>
                  <SliderBox $low $fill="linear-gradient(90deg, #000, #fff)">
                    <input id="light" type="range" defaultValue="80" />
                  </SliderBox>
                  <SpinField label="밝음 값" value="80" />
                </ShadowRow>
                <ShadowRow $h={36} $low>
                  <label htmlFor="dark">어두움</label>
                  <SliderBox $low $fill="linear-gradient(90deg, #000, #fff)">
                    <input id="dark" type="range" defaultValue="44" />
                  </SliderBox>
                  <SpinField label="어두움 값" value="45" />
                </ShadowRow>
              </Panels>

              <ScrollRail $wide>
                <button aria-label="위로"><Chevron up /></button>
                <span />
                <button aria-label="아래로"><Chevron /></button>
              </ScrollRail>
            </TrayBody>
          </Tray>
        </Work>

        <StatusBar>
          <StatusIcon aria-label="위치"><svg width="19" height="19" viewBox="0 0 19 19"><circle cx="9.5" cy="9.5" r="8.5" fill="none" stroke="#aaa" strokeWidth="1.4" /><path d="M9.5 16C8 11 6 10 6 7a3.5 3.5 0 017 0c0 3-2 4-3.5 9z" fill="#999" /></svg></StatusIcon>
          <StatusIcon aria-label="저작자"><svg width="19" height="19" viewBox="0 0 19 19"><circle cx="9.5" cy="9.5" r="8.3" fill="none" stroke="#000" strokeWidth="1.8" /><circle cx="9.5" cy="5" r="1.6" /><path d="M7 7.4h5v4h-1V16H8v-4.6H7z" /></svg></StatusIcon>
          <StatusIcon aria-label="로그인"><svg width="19" height="19" viewBox="0 0 19 19"><circle cx="9.5" cy="9.5" r="8.5" fill="none" stroke="#999" strokeWidth="1.4" /><circle cx="9.5" cy="7" r="3.4" fill="#999" /><path d="M4 15c0-5 11-5 11 0-3 3-8 3-11 0z" fill="#999" /></svg></StatusIcon>
          <StatusLine />
          <p>시작점을 선택하십시오. Ctrl '+' 또는 Ctrl '-'를 사용해 조각 수를 변경합니다.</p>
          <StatusLine />
          <label htmlFor="vcb">측면</label>
          <input id="vcb" defaultValue="12" />
        </StatusBar>
      </Window>
    </>
  );
};

export default App;
